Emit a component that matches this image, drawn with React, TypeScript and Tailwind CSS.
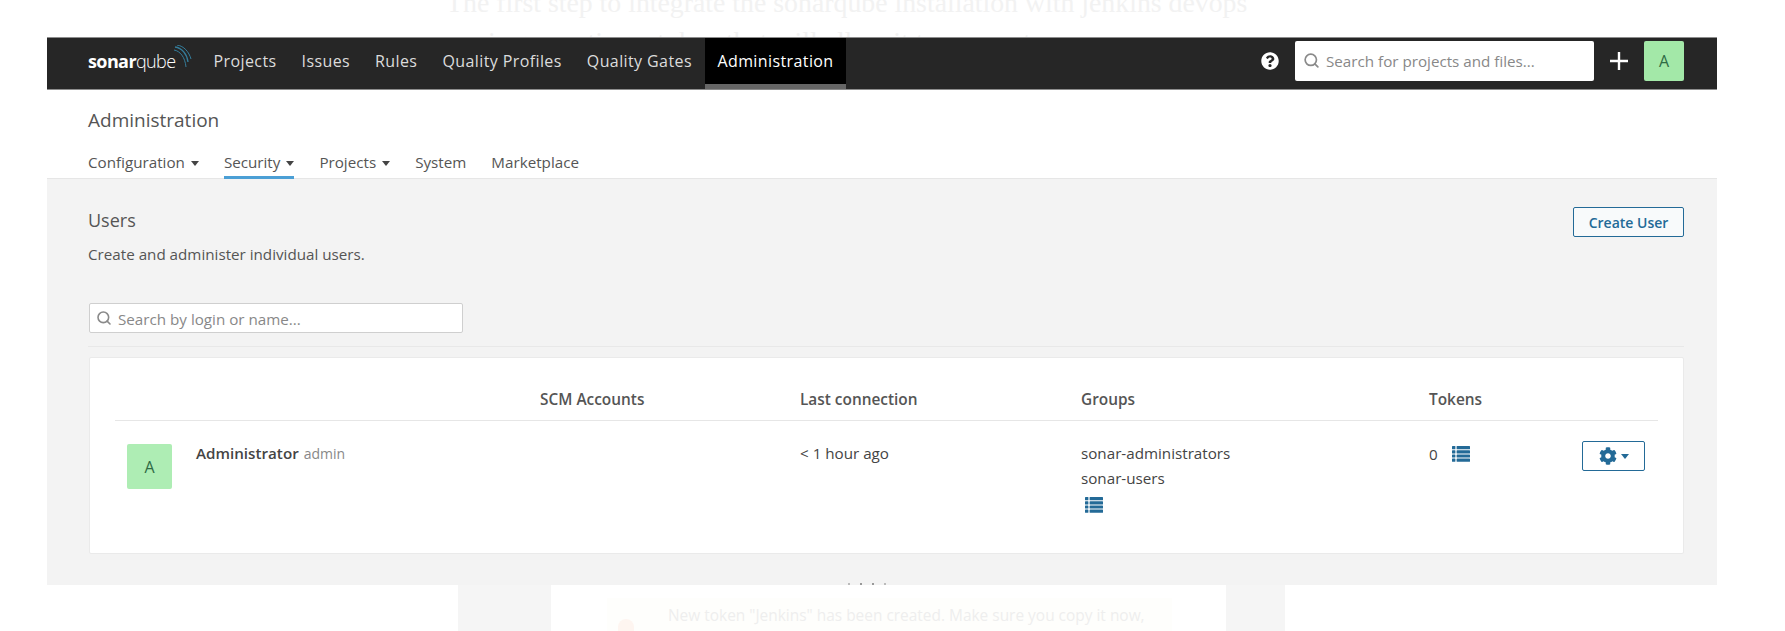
import React from "react";
import { FaCog, FaQuestionCircle } from "react-icons/fa";
import { Search } from "lucide-react";

const navItems = ["Projects", "Issues", "Rules", "Quality Profiles", "Quality Gates"];

function Caret() {
  return <span className="ml-[6px] inline-block border-x-[4.5px] border-t-[5px] border-x-transparent border-t-[#444] align-[2px]" />;
}

function ListIcon({ className }: { className: string }) {
  return (
    <svg width="18" height="16" viewBox="0 0 18 16" fill="#236a97" className={className}>
      {[0, 4.2, 8.4, 12.6].map((y) => (
        <g key={y}>
          <rect x="0" y={y} width="3.4" height="3.2" rx="0.5" />
          <rect x="4.6" y={y} width="13.4" height="3.2" rx="0.5" />
        </g>
      ))}
    </svg>
  );
}

function Logo() {
  return (
    <div className="flex w-[113px] items-center pb-[6px] text-[18px] leading-none tracking-[-0.6px] text-white">
      <span className="font-bold">sonar</span>
      <span className="font-light">qube</span>
      <svg width="18" height="26" viewBox="0 0 18 26" fill="none" stroke="#357d9b" className="mb-[5px] ml-[-2px]">
        <path d="M1 2c7 1 12 7 13 15" strokeWidth="1.4" />
        <path d="M3 0c7 1 12 7 14 14" strokeWidth="1" />
        <path d="M0 5c6 1 11 7 12 17" strokeWidth="1" />
      </svg>
    </div>
  );
}

function TopBar() {
  return (
    <div className="flex h-[53px] items-stretch border-y border-y-[#8d8d8d] bg-[#262626] pl-[41px] pr-[33px] text-[16px] tracking-[0.4px] text-[#dcdcdc]">
      <Logo />
      {navItems.map((item) => (
        <div key={item} className="flex items-center px-[12.5px] pb-[6px]">{item}</div>
      ))}
      <div className="ml-[1px] flex items-center border-b-[5px] border-b-[#666] bg-black px-[12px] pb-[1px] text-white">Administration</div>
      <div className="ml-auto flex items-center pb-[6px] text-[15.2px] tracking-normal">
        <FaQuestionCircle className="mr-[16px] text-[18px] text-white" />
        <div className="flex h-[40px] w-[299px] items-center gap-[6px] rounded-[2px] bg-white pl-[8px] pt-[1px] text-[#888]">
          <Search size={17} strokeWidth={2.4} className="mb-[2px] text-[#8a8a8a]" />
          <span>Search for projects and files...</span>
        </div>
        <svg width="18" height="18" viewBox="0 0 18 18" className="mx-[16px]" stroke="white" strokeWidth="2.4">
          <path d="M9 0v18M0 9h18" />
        </svg>
        <div className="flex h-[40px] w-[40px] items-center justify-center rounded-[2px] bg-[#a3e8a8] text-[16px] text-[#2f6b45]">A</div>
      </div>
    </div>
  );
}

function SubNav() {
  return (
    <div className="h-[89px] border-b border-b-[#e6e6e6] bg-white pl-[41px] text-[#555]">
      <h1 className="pt-[17px] text-[19px] leading-[26px]">Administration</h1>
      <div className="mt-[18px] flex gap-[25px] text-[15.2px] leading-[22px]">
        <div>Configuration<Caret /></div>
        <div className="relative">
          Security<Caret />
          <div className="absolute inset-x-0 top-[25px] h-[3px] bg-[#4b9fd5]" />
        </div>
        <div>Projects<Caret /></div>
        <div>System</div>
        <div>Marketplace</div>
      </div>
    </div>
  );
}

function UsersTable() {
  return (
    <div className="ml-[1px] mt-[10px] h-[197px] rounded-[2px] border border-[#eaeaea] bg-white px-[25px] text-[15.2px] text-[#444]">
      <div className="grid h-[63px] grid-cols-[425px_260px_281px_1fr] items-center border-b border-b-[#e6e6e6] pt-[21px] text-[15.4px] font-semibold text-[#555]">
        <div className="col-start-1" />
        <div>SCM Accounts</div>
        <div>Last connection</div>
        <div className="grid grid-cols-[348px_1fr]">
          <span>Groups</span>
          <span>Tokens</span>
        </div>
      </div>
      <div className="grid grid-cols-[425px_260px_281px_348px_1fr] pt-[23px]">
        <div className="flex">
          <div className="ml-[12px] flex h-[45px] w-[45px] items-center justify-center rounded-[2px] bg-[#aeedb4] text-[16px] text-[#2f6b45]">A</div>
          <div className="ml-[24px] -mt-[2px] leading-[22px]">
            <span className="font-semibold">Administrator</span>
            <span className="ml-[5px] text-[14px] text-[#888]">admin</span>
          </div>
        </div>
        <div />
        <div className="-mt-[2px] leading-[22px]">&lt; 1 hour ago</div>
        <div className="-mt-[3px] leading-[25px]">
          <div>sonar-administrators</div>
          <div>sonar-users</div>
          <ListIcon className="ml-[4px] mt-[6px]" />
        </div>
        <div className="flex justify-between pr-[13px]">
          <div className="-mt-[1px] flex h-[22px] items-center gap-[14px]">
            <span>0</span>
            <ListIcon className="" />
          </div>
          <div className="-mt-[3px] flex h-[30px] w-[63px] items-center justify-center gap-[4px] rounded-[2px] border border-[#236a97] text-[#236a97]">
            <FaCog className="text-[18px]" />
            <span className="border-x-[4px] border-t-[5px] border-x-transparent border-t-[#236a97]" />
          </div>
        </div>
      </div>
    </div>
  );
}

export default function App() {
  return (
    <div className="h-[631px] overflow-hidden bg-white font-['Open_Sans',sans-serif]">
      <div className="h-[37px] overflow-hidden font-['Liberation_Serif',serif] text-[27.8px] leading-[32px] text-[#f2f2f2]">
        <div className="-mt-[13px] pl-[446px]">The first step to integrate the sonarqube installation with jenkins devops</div>
        <div className="mt-[7px] pl-[488px]">is generating a token that will allow it to connect</div>
      </div>
      <div className="ml-[47px] w-[1670px]">
        <TopBar />
        <SubNav />
        <div className="h-[406px] bg-[#f3f3f3] pl-[41px] pr-[33px] pt-[28px]">
          <div className="flex items-start justify-between">
            <div className="text-[#555]">
              <h2 className="text-[18px] leading-[26px]">Users</h2>
              <p className="mt-[10px] text-[15.2px] leading-[22px]">Create and administer individual users.</p>
            </div>
            <button className="h-[30px] w-[111px] rounded-[2px] border border-[#236a97] bg-[#f8fafb] pt-[1px] text-[14px] font-semibold text-[#236a97]">Create User</button>
          </div>
          <div className="ml-[1px] mt-[38px] flex h-[30px] w-[374px] items-center gap-[6px] rounded-[2px] border border-[#cfcfcf] bg-white pl-[6px] pt-[3px] text-[15.2px] text-[#888]">
            <Search size={16} strokeWidth={2.4} className="mb-[4px] text-[#8a8a8a]" />
            <span>Search by login or name...</span>
          </div>
          <div className="mt-[13px] h-px bg-[#e8e8e8]" />
          <UsersTable />
        </div>
      </div>
      <div className="relative ml-[458px] h-[46px] w-[827px] bg-[#f5f5f5] pl-[93px] pr-[59px]">
        <div className="h-full bg-white pl-[56px] pr-[54px] pt-[13px]">
          <div className="flex h-full gap-[34px] bg-[#fefefc] pl-[11px] pt-[6px] text-[15.45px] text-[#eeeeee]">
            <span className="mt-[15px] h-[20px] w-[16px] rounded-full bg-[#fef5f0]" />
            <span className="whitespace-nowrap">New token "Jenkins" has been created. Make sure you copy it now,</span>
          </div>
        </div>
        <div className="absolute left-[390px] top-[-2px] flex gap-[10px]">
          <span className="h-[2px] w-[2px] bg-[#bbb]" />
          <span className="h-[2px] w-[2px] bg-[#999]" />
          <span className="h-[2px] w-[2px] bg-[#999]" />
          <span className="h-[2px] w-[2px] bg-[#bbb]" />
        </div>
      </div>
    </div>
  );
}
